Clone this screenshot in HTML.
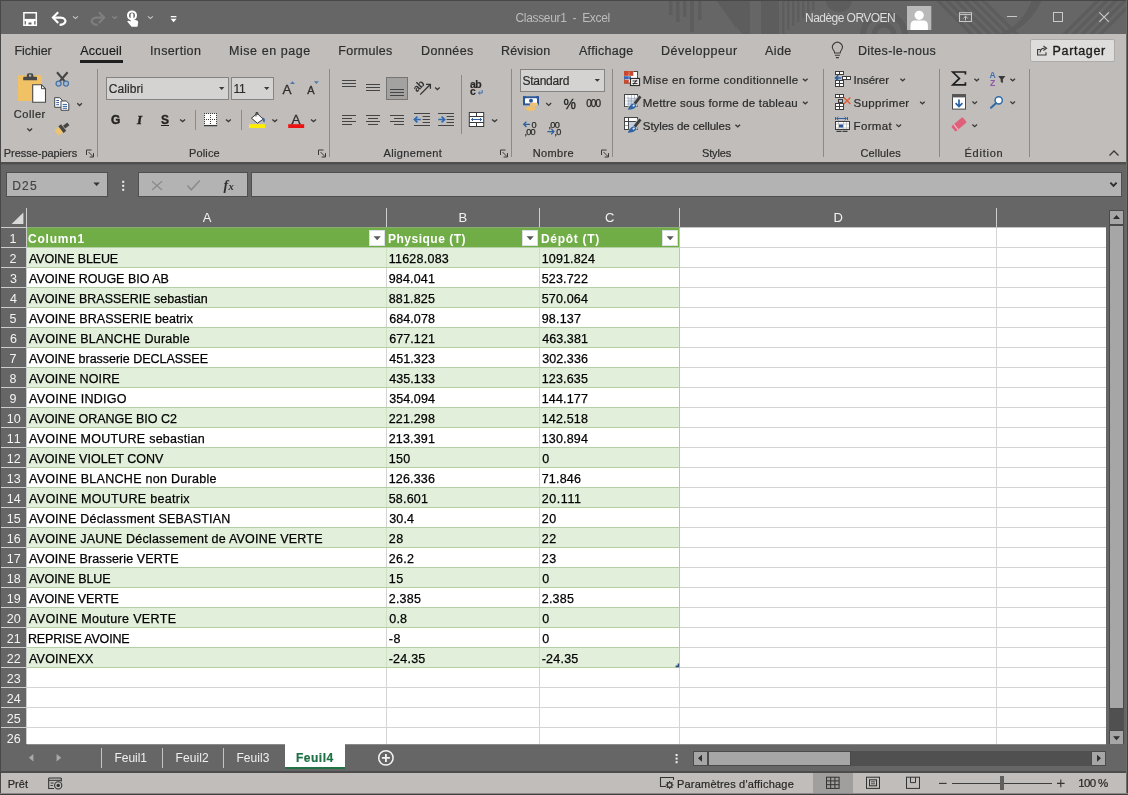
<!DOCTYPE html>
<html lang="fr"><head><meta charset="utf-8"><title>Classeur1 - Excel</title>
<style>
html,body{margin:0;padding:0;}
body{width:1128px;height:795px;overflow:hidden;background:#666666;position:relative;font-family:"Liberation Sans",sans-serif;}
#app{position:absolute;left:0;top:0;width:1128px;height:795px;overflow:hidden;}
#app div,#app span,#app svg{position:absolute;}
#app span{white-space:pre;line-height:20px;height:20px;}
#tx{left:0;top:0;width:1128px;height:795px;will-change:transform;}
#app svg{overflow:visible;}
</style></head>
<body><div id="app">
<div style="left:0px;top:0px;width:1128px;height:34px;background:#666666;"></div>
<svg style="left:0;top:0;overflow:hidden" width="1128" height="34" viewBox="0 0 1128 34"><rect x="669" y="0" width="3.5" height="15" fill="#5d5d5d"/><rect x="676" y="0" width="3.5" height="22" fill="#5d5d5d"/><rect x="683" y="0" width="3.5" height="17" fill="#5d5d5d"/><rect x="690" y="0" width="4" height="32" fill="#5d5d5d"/><rect x="698" y="0" width="3.5" height="20" fill="#5d5d5d"/><path d="M716 0 L736 0 L736 28 Z" fill="#5d5d5d"/><path d="M736 0 L750 0 L750 34 L742 34 L736 26 Z" fill="#5d5d5d"/><rect x="761" y="0" width="18" height="34" fill="#5d5d5d"/><rect x="782" y="0" width="2.5" height="34" fill="#5d5d5d"/><rect x="787" y="0" width="2.5" height="30" fill="#5d5d5d"/><rect x="792" y="0" width="2.5" height="26" fill="#5d5d5d"/><rect x="797" y="0" width="2.5" height="22" fill="#5d5d5d"/><rect x="802" y="0" width="2.5" height="18" fill="#5d5d5d"/><rect x="807" y="0" width="2.5" height="14" fill="#5d5d5d"/><rect x="812" y="0" width="2.5" height="10" fill="#5d5d5d"/><path d="M826 0 A13 12 0 0 0 852 0 Z" fill="#5d5d5d"/><circle cx="884" cy="35" r="21" fill="none" stroke="#5d5d5d" stroke-width="6"/><circle cx="884" cy="35" r="10" fill="none" stroke="#5d5d5d" stroke-width="5"/><path d="M935 0 L940 0 L974 34 L969 34 Z" fill="#5d5d5d"/><path d="M944 0 L949 0 L983 34 L978 34 Z" fill="#5d5d5d"/><path d="M953 0 L958 0 L992 34 L987 34 Z" fill="#5d5d5d"/><path d="M962 0 L967 0 L1001 34 L996 34 Z" fill="#5d5d5d"/><path d="M971 0 L976 0 L1010 34 L1005 34 Z" fill="#5d5d5d"/><path d="M980 0 L985 0 L1019 34 L1014 34 Z" fill="#5d5d5d"/><path d="M1032 0 A 60 60 0 0 1 1000 34 L1010 34 A 70 70 0 0 0 1042 0 Z" fill="#5d5d5d"/><path d="M1096 0 L1101 0 L1067 34 L1062 34 Z" fill="#5d5d5d"/><path d="M1105 0 L1110 0 L1076 34 L1071 34 Z" fill="#5d5d5d"/><path d="M1114 0 L1119 0 L1085 34 L1080 34 Z" fill="#5d5d5d"/><path d="M1123 0 L1128 0 L1094 34 L1089 34 Z" fill="#5d5d5d"/><path d="M1132 0 L1137 0 L1103 34 L1098 34 Z" fill="#5d5d5d"/></svg>
<div style="left:0px;top:34px;width:1128px;height:128px;background:#c0bdba;"></div>
<div style="left:0px;top:162px;width:1128px;height:2px;background:#4e4e4e;"></div>
<div style="left:0px;top:164px;width:1128px;height:1px;background:#5c5c5c;"></div>
<div style="left:80px;top:60px;width:43px;height:3px;background:#1f1f1f;"></div>
<div style="left:1030px;top:39px;width:85px;height:23px;background:#dfdddb;border:1px solid #aeacaa;box-sizing:border-box;border-radius:2px;"></div>
<div style="left:97px;top:69px;width:1px;height:88px;background:#8c8a88;"></div>
<div style="left:329px;top:69px;width:1px;height:88px;background:#8c8a88;"></div>
<div style="left:511px;top:69px;width:1px;height:88px;background:#8c8a88;"></div>
<div style="left:612px;top:69px;width:1px;height:88px;background:#8c8a88;"></div>
<div style="left:823px;top:69px;width:1px;height:88px;background:#8c8a88;"></div>
<div style="left:939px;top:69px;width:1px;height:88px;background:#8c8a88;"></div>
<div style="left:1029px;top:69px;width:1px;height:88px;background:#8c8a88;"></div>
<div style="left:106px;top:77px;width:123px;height:23px;background:#d5d3d1;border:1px solid #868482;box-sizing:border-box;"></div>
<div style="left:231px;top:77px;width:43px;height:23px;background:#d5d3d1;border:1px solid #868482;box-sizing:border-box;"></div>
<div style="left:161px;top:125px;width:8px;height:1px;background:#222222;"></div>
<div style="left:195px;top:110px;width:1px;height:20px;background:#8c8a88;"></div>
<div style="left:241px;top:110px;width:1px;height:20px;background:#8c8a88;"></div>
<div style="left:386px;top:77px;width:22px;height:23px;background:#a4a2a0;border:1px solid #777573;box-sizing:border-box;"></div>
<div style="left:461px;top:75px;width:1px;height:59px;background:#8c8a88;"></div>
<div style="left:520px;top:69px;width:85px;height:23px;background:#d5d3d1;border:1px solid #868482;box-sizing:border-box;"></div>
<div style="left:6px;top:172px;width:102px;height:25px;background:#b3b3b3;border:1px solid #4f4f4f;box-sizing:border-box;"></div>
<div style="left:138px;top:172px;width:110px;height:25px;background:#b3b3b3;border:1px solid #4f4f4f;box-sizing:border-box;"></div>
<div style="left:251px;top:172px;width:871px;height:25px;background:#b3b3b3;border:1px solid #4f4f4f;box-sizing:border-box;"></div>
<div style="left:27px;top:228px;width:1079px;height:517px;background:#ffffff;"></div>
<div style="left:386px;top:208px;width:1px;height:20px;background:#cdcdcd;"></div>
<div style="left:539px;top:208px;width:1px;height:20px;background:#cdcdcd;"></div>
<div style="left:679px;top:208px;width:1px;height:20px;background:#cdcdcd;"></div>
<div style="left:996px;top:208px;width:1px;height:20px;background:#cdcdcd;"></div>
<div style="left:26px;top:208px;width:1px;height:537px;background:#cdcdcd;"></div>
<div style="left:1px;top:227px;width:26px;height:1px;background:#cdcdcd;"></div>
<div style="left:1px;top:247px;width:26px;height:1px;background:#cdcdcd;"></div>
<div style="left:1px;top:267px;width:26px;height:1px;background:#cdcdcd;"></div>
<div style="left:1px;top:287px;width:26px;height:1px;background:#cdcdcd;"></div>
<div style="left:1px;top:307px;width:26px;height:1px;background:#cdcdcd;"></div>
<div style="left:1px;top:327px;width:26px;height:1px;background:#cdcdcd;"></div>
<div style="left:1px;top:347px;width:26px;height:1px;background:#cdcdcd;"></div>
<div style="left:1px;top:367px;width:26px;height:1px;background:#cdcdcd;"></div>
<div style="left:1px;top:387px;width:26px;height:1px;background:#cdcdcd;"></div>
<div style="left:1px;top:407px;width:26px;height:1px;background:#cdcdcd;"></div>
<div style="left:1px;top:427px;width:26px;height:1px;background:#cdcdcd;"></div>
<div style="left:1px;top:447px;width:26px;height:1px;background:#cdcdcd;"></div>
<div style="left:1px;top:467px;width:26px;height:1px;background:#cdcdcd;"></div>
<div style="left:1px;top:487px;width:26px;height:1px;background:#cdcdcd;"></div>
<div style="left:1px;top:507px;width:26px;height:1px;background:#cdcdcd;"></div>
<div style="left:1px;top:527px;width:26px;height:1px;background:#cdcdcd;"></div>
<div style="left:1px;top:547px;width:26px;height:1px;background:#cdcdcd;"></div>
<div style="left:1px;top:567px;width:26px;height:1px;background:#cdcdcd;"></div>
<div style="left:1px;top:587px;width:26px;height:1px;background:#cdcdcd;"></div>
<div style="left:1px;top:607px;width:26px;height:1px;background:#cdcdcd;"></div>
<div style="left:1px;top:627px;width:26px;height:1px;background:#cdcdcd;"></div>
<div style="left:1px;top:647px;width:26px;height:1px;background:#cdcdcd;"></div>
<div style="left:1px;top:667px;width:26px;height:1px;background:#cdcdcd;"></div>
<div style="left:1px;top:687px;width:26px;height:1px;background:#cdcdcd;"></div>
<div style="left:1px;top:707px;width:26px;height:1px;background:#cdcdcd;"></div>
<div style="left:1px;top:727px;width:26px;height:1px;background:#cdcdcd;"></div>
<div style="left:1px;top:747px;width:26px;height:1px;background:#cdcdcd;"></div>
<div style="left:386px;top:228px;width:1px;height:517px;background:#d4d4d4;"></div>
<div style="left:539px;top:228px;width:1px;height:517px;background:#d4d4d4;"></div>
<div style="left:679px;top:228px;width:1px;height:517px;background:#d4d4d4;"></div>
<div style="left:996px;top:228px;width:1px;height:517px;background:#d4d4d4;"></div>
<div style="left:27px;top:247px;width:1079px;height:1px;background:#d4d4d4;"></div>
<div style="left:27px;top:267px;width:1079px;height:1px;background:#d4d4d4;"></div>
<div style="left:27px;top:287px;width:1079px;height:1px;background:#d4d4d4;"></div>
<div style="left:27px;top:307px;width:1079px;height:1px;background:#d4d4d4;"></div>
<div style="left:27px;top:327px;width:1079px;height:1px;background:#d4d4d4;"></div>
<div style="left:27px;top:347px;width:1079px;height:1px;background:#d4d4d4;"></div>
<div style="left:27px;top:367px;width:1079px;height:1px;background:#d4d4d4;"></div>
<div style="left:27px;top:387px;width:1079px;height:1px;background:#d4d4d4;"></div>
<div style="left:27px;top:407px;width:1079px;height:1px;background:#d4d4d4;"></div>
<div style="left:27px;top:427px;width:1079px;height:1px;background:#d4d4d4;"></div>
<div style="left:27px;top:447px;width:1079px;height:1px;background:#d4d4d4;"></div>
<div style="left:27px;top:467px;width:1079px;height:1px;background:#d4d4d4;"></div>
<div style="left:27px;top:487px;width:1079px;height:1px;background:#d4d4d4;"></div>
<div style="left:27px;top:507px;width:1079px;height:1px;background:#d4d4d4;"></div>
<div style="left:27px;top:527px;width:1079px;height:1px;background:#d4d4d4;"></div>
<div style="left:27px;top:547px;width:1079px;height:1px;background:#d4d4d4;"></div>
<div style="left:27px;top:567px;width:1079px;height:1px;background:#d4d4d4;"></div>
<div style="left:27px;top:587px;width:1079px;height:1px;background:#d4d4d4;"></div>
<div style="left:27px;top:607px;width:1079px;height:1px;background:#d4d4d4;"></div>
<div style="left:27px;top:627px;width:1079px;height:1px;background:#d4d4d4;"></div>
<div style="left:27px;top:647px;width:1079px;height:1px;background:#d4d4d4;"></div>
<div style="left:27px;top:667px;width:1079px;height:1px;background:#d4d4d4;"></div>
<div style="left:27px;top:687px;width:1079px;height:1px;background:#d4d4d4;"></div>
<div style="left:27px;top:707px;width:1079px;height:1px;background:#d4d4d4;"></div>
<div style="left:27px;top:727px;width:1079px;height:1px;background:#d4d4d4;"></div>
<div style="left:27px;top:747px;width:1079px;height:1px;background:#d4d4d4;"></div>
<div style="left:27px;top:228px;width:653px;height:19px;background:#70ad47;"></div>
<div style="left:27px;top:247px;width:653px;height:1px;background:#b4cfa3;"></div>
<div style="left:27px;top:248px;width:653px;height:19px;background:#e2efda;"></div>
<div style="left:27px;top:267px;width:653px;height:1px;background:#b4cfa3;"></div>
<div style="left:386px;top:248px;width:1px;height:19px;background:#cfe0c3;"></div>
<div style="left:539px;top:248px;width:1px;height:19px;background:#cfe0c3;"></div>
<div style="left:27px;top:287px;width:653px;height:1px;background:#b4cfa3;"></div>
<div style="left:386px;top:268px;width:1px;height:19px;background:#d4d4d4;"></div>
<div style="left:539px;top:268px;width:1px;height:19px;background:#d4d4d4;"></div>
<div style="left:27px;top:288px;width:653px;height:19px;background:#e2efda;"></div>
<div style="left:27px;top:307px;width:653px;height:1px;background:#b4cfa3;"></div>
<div style="left:386px;top:288px;width:1px;height:19px;background:#cfe0c3;"></div>
<div style="left:539px;top:288px;width:1px;height:19px;background:#cfe0c3;"></div>
<div style="left:27px;top:327px;width:653px;height:1px;background:#b4cfa3;"></div>
<div style="left:386px;top:308px;width:1px;height:19px;background:#d4d4d4;"></div>
<div style="left:539px;top:308px;width:1px;height:19px;background:#d4d4d4;"></div>
<div style="left:27px;top:328px;width:653px;height:19px;background:#e2efda;"></div>
<div style="left:27px;top:347px;width:653px;height:1px;background:#b4cfa3;"></div>
<div style="left:386px;top:328px;width:1px;height:19px;background:#cfe0c3;"></div>
<div style="left:539px;top:328px;width:1px;height:19px;background:#cfe0c3;"></div>
<div style="left:27px;top:367px;width:653px;height:1px;background:#b4cfa3;"></div>
<div style="left:386px;top:348px;width:1px;height:19px;background:#d4d4d4;"></div>
<div style="left:539px;top:348px;width:1px;height:19px;background:#d4d4d4;"></div>
<div style="left:27px;top:368px;width:653px;height:19px;background:#e2efda;"></div>
<div style="left:27px;top:387px;width:653px;height:1px;background:#b4cfa3;"></div>
<div style="left:386px;top:368px;width:1px;height:19px;background:#cfe0c3;"></div>
<div style="left:539px;top:368px;width:1px;height:19px;background:#cfe0c3;"></div>
<div style="left:27px;top:407px;width:653px;height:1px;background:#b4cfa3;"></div>
<div style="left:386px;top:388px;width:1px;height:19px;background:#d4d4d4;"></div>
<div style="left:539px;top:388px;width:1px;height:19px;background:#d4d4d4;"></div>
<div style="left:27px;top:408px;width:653px;height:19px;background:#e2efda;"></div>
<div style="left:27px;top:427px;width:653px;height:1px;background:#b4cfa3;"></div>
<div style="left:386px;top:408px;width:1px;height:19px;background:#cfe0c3;"></div>
<div style="left:539px;top:408px;width:1px;height:19px;background:#cfe0c3;"></div>
<div style="left:27px;top:447px;width:653px;height:1px;background:#b4cfa3;"></div>
<div style="left:386px;top:428px;width:1px;height:19px;background:#d4d4d4;"></div>
<div style="left:539px;top:428px;width:1px;height:19px;background:#d4d4d4;"></div>
<div style="left:27px;top:448px;width:653px;height:19px;background:#e2efda;"></div>
<div style="left:27px;top:467px;width:653px;height:1px;background:#b4cfa3;"></div>
<div style="left:386px;top:448px;width:1px;height:19px;background:#cfe0c3;"></div>
<div style="left:539px;top:448px;width:1px;height:19px;background:#cfe0c3;"></div>
<div style="left:27px;top:487px;width:653px;height:1px;background:#b4cfa3;"></div>
<div style="left:386px;top:468px;width:1px;height:19px;background:#d4d4d4;"></div>
<div style="left:539px;top:468px;width:1px;height:19px;background:#d4d4d4;"></div>
<div style="left:27px;top:488px;width:653px;height:19px;background:#e2efda;"></div>
<div style="left:27px;top:507px;width:653px;height:1px;background:#b4cfa3;"></div>
<div style="left:386px;top:488px;width:1px;height:19px;background:#cfe0c3;"></div>
<div style="left:539px;top:488px;width:1px;height:19px;background:#cfe0c3;"></div>
<div style="left:27px;top:527px;width:653px;height:1px;background:#b4cfa3;"></div>
<div style="left:386px;top:508px;width:1px;height:19px;background:#d4d4d4;"></div>
<div style="left:539px;top:508px;width:1px;height:19px;background:#d4d4d4;"></div>
<div style="left:27px;top:528px;width:653px;height:19px;background:#e2efda;"></div>
<div style="left:27px;top:547px;width:653px;height:1px;background:#b4cfa3;"></div>
<div style="left:386px;top:528px;width:1px;height:19px;background:#cfe0c3;"></div>
<div style="left:539px;top:528px;width:1px;height:19px;background:#cfe0c3;"></div>
<div style="left:27px;top:567px;width:653px;height:1px;background:#b4cfa3;"></div>
<div style="left:386px;top:548px;width:1px;height:19px;background:#d4d4d4;"></div>
<div style="left:539px;top:548px;width:1px;height:19px;background:#d4d4d4;"></div>
<div style="left:27px;top:568px;width:653px;height:19px;background:#e2efda;"></div>
<div style="left:27px;top:587px;width:653px;height:1px;background:#b4cfa3;"></div>
<div style="left:386px;top:568px;width:1px;height:19px;background:#cfe0c3;"></div>
<div style="left:539px;top:568px;width:1px;height:19px;background:#cfe0c3;"></div>
<div style="left:27px;top:607px;width:653px;height:1px;background:#b4cfa3;"></div>
<div style="left:386px;top:588px;width:1px;height:19px;background:#d4d4d4;"></div>
<div style="left:539px;top:588px;width:1px;height:19px;background:#d4d4d4;"></div>
<div style="left:27px;top:608px;width:653px;height:19px;background:#e2efda;"></div>
<div style="left:27px;top:627px;width:653px;height:1px;background:#b4cfa3;"></div>
<div style="left:386px;top:608px;width:1px;height:19px;background:#cfe0c3;"></div>
<div style="left:539px;top:608px;width:1px;height:19px;background:#cfe0c3;"></div>
<div style="left:27px;top:647px;width:653px;height:1px;background:#b4cfa3;"></div>
<div style="left:386px;top:628px;width:1px;height:19px;background:#d4d4d4;"></div>
<div style="left:539px;top:628px;width:1px;height:19px;background:#d4d4d4;"></div>
<div style="left:27px;top:648px;width:653px;height:19px;background:#e2efda;"></div>
<div style="left:27px;top:667px;width:653px;height:1px;background:#b4cfa3;"></div>
<div style="left:386px;top:648px;width:1px;height:19px;background:#cfe0c3;"></div>
<div style="left:539px;top:648px;width:1px;height:19px;background:#cfe0c3;"></div>
<div style="left:679px;top:228px;width:1px;height:440px;background:#b4cfa3;"></div>
<div style="left:27px;top:227px;width:653px;height:1px;background:#8aab74;"></div>
<div style="left:680px;top:227px;width:426px;height:1px;background:#c4c4c4;"></div>
<div style="left:369px;top:230px;width:16px;height:16px;background:#ffffff;border:1px solid #dedee6;box-sizing:border-box;"></div>
<div style="left:522px;top:230px;width:16px;height:16px;background:#ffffff;border:1px solid #dedee6;box-sizing:border-box;"></div>
<div style="left:662px;top:230px;width:16px;height:16px;background:#ffffff;border:1px solid #dedee6;box-sizing:border-box;"></div>
<div style="left:1106px;top:208px;width:20px;height:537px;background:#666666;"></div>
<div style="left:1109px;top:225px;width:15px;height:506px;background:#505050;"></div>
<div style="left:1109px;top:210px;width:15px;height:15px;background:#a6a6a6;border:1px solid #4a4a4a;box-sizing:border-box;"></div>
<div style="left:1109px;top:225px;width:15px;height:484px;background:#a6a6a6;border:1px solid #4a4a4a;box-sizing:border-box;"></div>
<div style="left:1109px;top:730px;width:15px;height:15px;background:#a6a6a6;border:1px solid #4a4a4a;box-sizing:border-box;"></div>
<div style="left:0px;top:744px;width:1128px;height:28px;background:#666666;"></div>
<div style="left:27px;top:744px;width:1079px;height:1px;background:#8a8a8a;"></div>
<div style="left:101px;top:748px;width:1px;height:20px;background:#c4c4c4;"></div>
<div style="left:162px;top:748px;width:1px;height:20px;background:#c4c4c4;"></div>
<div style="left:223px;top:748px;width:1px;height:20px;background:#c4c4c4;"></div>
<div style="left:284.5px;top:744px;width:60px;height:23px;background:#ffffff;"></div>
<div style="left:284.5px;top:767px;width:60px;height:2px;background:#217346;"></div>
<div style="left:693px;top:751px;width:413px;height:15px;background:#505050;"></div>
<div style="left:693px;top:751px;width:15px;height:15px;background:#a6a6a6;border:1px solid #4a4a4a;box-sizing:border-box;"></div>
<div style="left:708px;top:751px;width:143px;height:15px;background:#a6a6a6;border:1px solid #4a4a4a;box-sizing:border-box;"></div>
<div style="left:1091px;top:751px;width:15px;height:15px;background:#a6a6a6;border:1px solid #4a4a4a;box-sizing:border-box;"></div>
<div style="left:0px;top:771px;width:1128px;height:2px;background:#4c4c4c;"></div>
<div style="left:0px;top:773px;width:1128px;height:22px;background:#c0bdba;"></div>
<div style="left:813px;top:773px;width:40px;height:21px;background:#a19f9d;"></div>
<div style="left:952px;top:783px;width:100px;height:1px;background:#3e3e3e;"></div>
<div style="left:1000px;top:776px;width:4px;height:14px;background:#5f5f5f;"></div>
<div style="left:0px;top:0px;width:1128px;height:1px;background:#484848;"></div>
<div style="left:0px;top:0px;width:1px;height:795px;background:#484848;"></div>
<div style="left:1126px;top:0px;width:1px;height:795px;background:#6e6c6a;"></div>
<div style="left:1127px;top:0px;width:1px;height:795px;background:#424242;"></div>
<div style="left:0px;top:794px;width:1128px;height:1px;background:#404040;"></div>
<div style="left:0px;top:793px;width:1128px;height:1px;background:#8b8987;"></div>
<svg style="left:0;top:0;will-change:transform" width="1128" height="795" viewBox="0 0 1128 795">
<path d="M23.9 12.7 H36.3 V25.3 H23.9 Z" fill="none" stroke="#ffffff" stroke-width="1.5"/><rect x="24.4" y="18.9" width="11.4" height="2.2" fill="#ffffff"/><path d="M25.9 21 H34.2 V25.3 H31.5 V22.5 H28.5 V25.3 H25.9 Z" fill="#ffffff"/>
<path d="M58.2 12.3 L52.9 17.6 L58.2 22.9" fill="none" stroke="#ffffff" stroke-width="2.1"/><path d="M53.3 17.6 H60.4 C64.6 17.6 66 20.3 65.1 22.3 C64.3 24 62.4 24.8 59.6 24.9" fill="none" stroke="#ffffff" stroke-width="2.1"/>
<path d="M73.00 16.40 L75.50 18.50 L78.00 16.40" fill="none" stroke="#c4c4c4" stroke-width="1.1"/>
<path d="M98.9 12.3 L104.2 17.6 L98.9 22.9" fill="none" stroke="#7f7f7f" stroke-width="2.1"/><path d="M103.8 17.6 H96.7 C92.5 17.6 91.1 20.3 92 22.3 C92.8 24 94.7 24.8 97.5 24.9" fill="none" stroke="#7f7f7f" stroke-width="2.1"/>
<path d="M112.40 16.40 L114.70 18.50 L117.00 16.40" fill="none" stroke="#8c8c8c" stroke-width="1.1"/>
<circle cx="132" cy="15.4" r="4" fill="none" stroke="#ffffff" stroke-width="2"/><path d="M130.6 14.6 a1.4 1.4 0 0 1 2.8 0 V19.5 L137 20.6 Q138.4 21 138.2 22.6 L137.5 26.8 H131.6 L127.2 21.4 Q128.3 19.8 130.6 21.6 Z" fill="#ffffff"/>
<path d="M147.90 16.40 L150.40 18.50 L152.90 16.40" fill="none" stroke="#c4c4c4" stroke-width="1.1"/>
<rect x="170.8" y="16" width="5.6" height="1.3" fill="#ffffff"/><path d="M170.6 18.8 H176.6 L173.6 22.2 Z" fill="#ffffff"/>
<rect x="907" y="6" width="24.3" height="24" fill="#b9b9b9"/><circle cx="919.2" cy="15.3" r="4.6" fill="#ffffff"/><path d="M910.5 30 V25.5 Q910.5 20.6 915 20.6 H923.4 Q927.9 20.6 927.9 25.5 V30 Z" fill="#ffffff"/>
<rect x="959.5" y="12.7" width="12" height="8.8" fill="none" stroke="#c9c9c9" stroke-width="1"/><path d="M959.5 14.6 H971.5" stroke="#c9c9c9" stroke-width="1"/><path d="M965.5 20.5 V16.3 M963.3 18.3 L965.5 16.2 L967.7 18.3" fill="none" stroke="#c9c9c9" stroke-width="1"/>
<path d="M1007 16.5 H1017" stroke="#c9c9c9" stroke-width="1"/>
<rect x="1053.5" y="12.5" width="9" height="9" fill="none" stroke="#c9c9c9" stroke-width="1"/>
<path d="M1099.3 12.3 L1108.9 21.9 M1108.9 12.3 L1099.3 21.9" stroke="#c9c9c9" stroke-width="1.1"/>
<path d="M834.6 53 Q834.6 51.4 833.4 50 A4.9 4.9 0 1 1 841.4 50 Q840.2 51.4 840.2 53 Z" fill="none" stroke="#3a3a3a" stroke-width="1.1"/><path d="M834.9 55.3 H839.9 M835.9 57.6 H838.9" stroke="#3a3a3a" stroke-width="1.1"/>
<path d="M1040.5 49.5 H1037.6 V55 H1046 V52.3" fill="none" stroke="#3a3a3a" stroke-width="1.1"/><path d="M1040 52.5 Q1040.5 48.3 1044.6 48.1 M1043.4 45.9 L1046.6 48.2 L1043.4 50.5" fill="none" stroke="#3a3a3a" stroke-width="1.1"/>
<path d="M86.5 155.0 V150.0 H91.5" fill="none" stroke="#3a3a3a" stroke-width="1"/><path d="M88.6 152.1 L93.2 156.7 M93.5 153.1 V157.0 H89.6" fill="none" stroke="#3a3a3a" stroke-width="1"/>
<path d="M318.5 155.0 V150.0 H323.5" fill="none" stroke="#3a3a3a" stroke-width="1"/><path d="M320.6 152.1 L325.2 156.7 M325.5 153.1 V157.0 H321.6" fill="none" stroke="#3a3a3a" stroke-width="1"/>
<path d="M500.5 155.0 V150.0 H505.5" fill="none" stroke="#3a3a3a" stroke-width="1"/><path d="M502.6 152.1 L507.2 156.7 M507.5 153.1 V157.0 H503.6" fill="none" stroke="#3a3a3a" stroke-width="1"/>
<path d="M601.5 155.0 V150.0 H606.5" fill="none" stroke="#3a3a3a" stroke-width="1"/><path d="M603.6 152.1 L608.2 156.7 M608.5 153.1 V157.0 H604.6" fill="none" stroke="#3a3a3a" stroke-width="1"/>
<path d="M1109.5 155.5 L1114 151 L1118.5 155.5" fill="none" stroke="#3a3a3a" stroke-width="1.3"/>
<rect x="18" y="75.3" width="23.8" height="25.7" fill="#f0c265"/><path d="M23.2 80.2 V77.6 Q23.2 76.8 24 76.8 H26.8 V75.4 Q26.8 73.2 29 73.2 H31.2 Q33.4 73.2 33.4 75.4 V76.8 H36.2 Q37 76.8 37 77.6 V80.2 Z" fill="#474747"/><rect x="29" y="74.6" width="2.2" height="2" fill="#c0bdba"/><path d="M32.7 84.7 H41.5 L45.5 88.7 V102.3 H32.7 Z" fill="#ffffff" stroke="#474747" stroke-width="1.1"/><path d="M41.5 84.7 V88.7 H45.5" fill="none" stroke="#474747" stroke-width="1"/>
<path d="M27.30 128.60 L29.70 130.80 L32.10 128.60" fill="none" stroke="#3b3a39" stroke-width="1.3"/>
<path d="M57 72.2 L64.8 81.4 M67.6 72.2 L59.8 81.4" stroke="#454545" stroke-width="2.1" fill="none"/><circle cx="58.6" cy="83.6" r="2.5" fill="#aab9cc" stroke="#4a74a6" stroke-width="1.3"/><circle cx="66" cy="83.6" r="2.5" fill="#aab9cc" stroke="#4a74a6" stroke-width="1.3"/>
<path d="M54.7 97.7 H59.7 L62.3 100.3 V107.3 H54.7 Z" fill="#ffffff" stroke="#454545" stroke-width="1"/><path d="M56.3 100.5 H59 M56.3 102.6 H59 M56.3 104.7 H59" stroke="#2f5f9e" stroke-width="1"/><path d="M61 101 H66.2 L68.8 103.6 V110.3 H61 Z" fill="#ffffff" stroke="#454545" stroke-width="1"/><path d="M62.7 104.4 H67 M62.7 106.4 H67 M62.7 108.3 H67" stroke="#2f5f9e" stroke-width="1"/>
<path d="M77.30 103.20 L79.60 105.50 L81.90 103.20" fill="none" stroke="#3b3a39" stroke-width="1.3"/>
<g transform="rotate(-38 63 128)"><rect x="54.8" y="124.6" width="6" height="6.8" rx="1" fill="#eec46e"/><rect x="60.4" y="123.8" width="3.4" height="8.4" fill="#454545"/><rect x="64.4" y="126.2" width="5.4" height="3.6" fill="#454545"/></g>
<path d="M219 87 L224.4 87 L221.7 90 Z" fill="#3a3a3a"/>
<path d="M264 87 L269.4 87 L266.7 90 Z" fill="#3a3a3a"/>
<path d="M290 83.9 L295 83.9 L292.5 81.2 Z" fill="#4a78ad"/>
<path d="M314 81.2 L318.8 81.2 L316.4 83.9 Z" fill="#4a78ad"/>
<path d="M180.10 119.40 L182.60 121.60 L185.10 119.40" fill="none" stroke="#3b3a39" stroke-width="1.3"/>
<rect x="204.5" y="113.5" width="12" height="12" fill="#ffffff"/><path d="M204 113.5 H217 M204 119.5 H217" fill="none" stroke="#3a3a3a" stroke-width="1" stroke-dasharray="1 1"/><path d="M204.5 113 V125 M210.5 113 V125 M216.5 113 V125" fill="none" stroke="#3a3a3a" stroke-width="1" stroke-dasharray="1 1"/><path d="M204 125.6 H217.2" stroke="#3a3a3a" stroke-width="1.3"/>
<path d="M226.00 119.40 L228.40 121.60 L230.80 119.40" fill="none" stroke="#3b3a39" stroke-width="1.3"/>
<path d="M257.2 113.4 L263.2 119.2 L257.4 123.2 L251.4 118.2 Z" fill="#ffffff" stroke="#3a3a3a" stroke-width="1"/><path d="M256 116.5 V112.6 H257.8 V115" fill="none" stroke="#3a3a3a" stroke-width="1"/><path d="M262.6 117.2 Q266.2 118.8 264.4 122.4 Q262.2 121.8 262.6 117.2 Z" fill="#3c6aa3"/><rect x="249" y="124.2" width="16.2" height="3.8" fill="#ffee00"/>
<path d="M272.40 119.40 L274.80 121.60 L277.20 119.40" fill="none" stroke="#3b3a39" stroke-width="1.3"/>
<rect x="288.2" y="124.2" width="16" height="3.8" fill="#ee1111"/>
<path d="M311.00 119.40 L313.50 121.60 L316.00 119.40" fill="none" stroke="#3b3a39" stroke-width="1.3"/>
<path d="M342 80.5 H356 M342 83.5 H356 M342 86.5 H356 " stroke="#444444" stroke-width="1.05" fill="none"/>
<path d="M366 84.5 H380 M366 87.5 H380 M366 90.5 H380 " stroke="#444444" stroke-width="1.05" fill="none"/>
<path d="M390 89.5 H404 M390 92.5 H404 M390 95.5 H404 " stroke="#444444" stroke-width="1.05" fill="none"/>
<text transform="translate(417 92.6) rotate(-45)" x="0" y="0" font-family="Liberation Sans, sans-serif" font-size="10.5" font-weight="700" fill="#333" letter-spacing="-0.5">ab</text><path d="M420.2 94.6 L430 84.8 M426 84.3 H430.4 V88.7" fill="none" stroke="#333" stroke-width="1.3"/>
<path d="M435.10 87.40 L437.40 89.50 L439.70 87.40" fill="none" stroke="#3b3a39" stroke-width="1.3"/>
<path d="M342 115.5 H356 M342 118.5 H352 M342 121.5 H356 M342 124.5 H352 " stroke="#444444" stroke-width="1.05" fill="none"/>
<path d="M366 115.5 H380 M368.0 118.5 H378.0 M366 121.5 H380 M368.0 124.5 H378.0 " stroke="#444444" stroke-width="1.05" fill="none"/>
<path d="M390 115.5 H404 M394 118.5 H404 M390 121.5 H404 M394 124.5 H404 " stroke="#444444" stroke-width="1.05" fill="none"/>
<path d="M414 113.5 H430 M414 125.5 H430 M422.6 116.5 H430 M422.6 119.5 H430 M422.6 122.5 H430" stroke="#444444" stroke-width="1.05" fill="none"/>
<path d="M414.8 119.5 H420.8 M417.4 116.6 L414.4 119.5 L417.4 122.4" stroke="#2e6ab3" stroke-width="1.7" fill="none"/>
<path d="M438 113.5 H454 M438 125.5 H454 M446.6 116.5 H454 M446.6 119.5 H454 M446.6 122.5 H454" stroke="#444444" stroke-width="1.05" fill="none"/>
<path d="M438.3 119.5 H444.2 M441.6 116.6 L444.6 119.5 L441.6 122.4" stroke="#2e6ab3" stroke-width="1.7" fill="none"/>
<path d="M482.2 90 V93 H478.6 M480.2 91.4 L478.4 93 L480.2 94.6" fill="none" stroke="#3f6fae" stroke-width="1"/>
<rect x="469.3" y="112.5" width="14.4" height="14" fill="#ffffff" stroke="#3a3a3a" stroke-width="1"/><path d="M469.3 116.5 H483.7 M469.3 122.5 H483.7 M476.5 112.5 V116.5 M476.5 122.5 V126.5" stroke="#3a3a3a" stroke-width="1" fill="none"/><path d="M471.6 119.5 H481.4 M473 118 L471.4 119.5 L473 121 M480 118 L481.6 119.5 L480 121" stroke="#2e5f9e" stroke-width="1" fill="none"/>
<path d="M492.00 119.40 L494.60 121.60 L497.20 119.40" fill="none" stroke="#3b3a39" stroke-width="1.3"/>
<path d="M594.6 79 L600 79 L597.3 81.8 Z" fill="#3a3a3a"/>
<rect x="523" y="96.3" width="16" height="9" fill="#2b579a"/><path d="M525 98.2 H537 V103.4 H525 Z" fill="#ffffff"/><path d="M523 96.3 h3 v2 h-3 Z M536 96.3 h3 v2 h-3 Z" fill="#2b579a"/><circle cx="531" cy="100.8" r="2" fill="#2b579a"/><ellipse cx="534" cy="104.6" rx="4.2" ry="2" fill="#ecc27a"/><ellipse cx="530.6" cy="108.6" rx="4.6" ry="2.4" fill="#f0c16a"/>
<path d="M546.20 103.10 L548.70 105.40 L551.20 103.10" fill="none" stroke="#3b3a39" stroke-width="1.3"/>
<path d="M523.6 124.3 H530 M526.4 121.6 L523.7 124.3 L526.4 127" stroke="#2e5f9e" stroke-width="1.3" fill="none"/>
<text x="531.6" y="127.6" font-family="Liberation Sans, sans-serif" font-size="9.2" fill="#2a2a2a" stroke="#2a2a2a" stroke-width="0.25" letter-spacing="-0.8">0</text>
<text x="524.4" y="134.6" font-family="Liberation Sans, sans-serif" font-size="9.2" fill="#2a2a2a" stroke="#2a2a2a" stroke-width="0.25" letter-spacing="-0.8">,00</text>
<text x="548.6" y="127.6" font-family="Liberation Sans, sans-serif" font-size="9.2" fill="#2a2a2a" stroke="#2a2a2a" stroke-width="0.25" letter-spacing="-0.8">,00</text>
<path d="M547.4 131.6 H554 M551.2 128.9 L553.9 131.6 L551.2 134.3" stroke="#2e5f9e" stroke-width="1.3" fill="none"/>
<text x="554.4" y="134.6" font-family="Liberation Sans, sans-serif" font-size="9.2" fill="#2a2a2a" stroke="#2a2a2a" stroke-width="0.25" letter-spacing="-0.8">,0</text>
<rect x="624.5" y="71.5" width="13" height="11.5" fill="#ffffff" stroke="#454545" stroke-width="1"/><rect x="624" y="71" width="9.5" height="5" fill="#c9472c"/><rect x="624" y="76" width="7" height="3.6" fill="#3668b3"/><rect x="624" y="79.6" width="5" height="3.9" fill="#c9472c"/><path d="M629 71.5 V83 M633.5 71.5 V78 M624.5 76 H637.5 M624.5 79.6 H630" stroke="#ffffff" stroke-opacity=".55" stroke-width=".7"/><rect x="630.5" y="78.5" width="9" height="7" fill="#ffffff" stroke="#2e2e2e" stroke-width="1.2"/><path d="M632.5 81 H637.5 M632.5 83.4 H637.5" stroke="#1e1e1e" stroke-width="1" fill="none"/><path d="M636.6 79.8 L633.6 84.6" stroke="#1e1e1e" stroke-width=".9" fill="none"/>
<rect x="624.5" y="94.5" width="13" height="12" fill="#ffffff" stroke="#454545" stroke-width="1"/><rect x="628" y="98" width="9.5" height="8.5" fill="#dbe2ec"/><path d="M628 95 V106.5 M631.3 95 V106.5 M634.6 95 V106.5 M625 98 H637.5 M625 101 H637.5 M625 104 H637.5" stroke="#9eabbd" stroke-width="1" fill="none"/><rect x="625" y="95" width="2.6" height="2.6" fill="#fff"/><rect x="628.5" y="95" width="2.4" height="2.6" fill="#fff"/><rect x="631.8" y="95" width="2.4" height="2.6" fill="#fff"/><rect x="635.1" y="95" width="2" height="2.6" fill="#fff"/><rect x="625" y="98.5" width="2.6" height="2.1" fill="#fff"/><rect x="625" y="101.5" width="2.6" height="2.1" fill="#fff"/><rect x="625" y="104.5" width="2.6" height="1.6" fill="#fff"/><path d="M641 96 L634.6 104" stroke="#c0bdba" stroke-width="5"/><path d="M640.4 96.4 L634.8 103.6" stroke="#3c3c3c" stroke-width="2.8"/><path d="M627.8 109.8 Q629.6 104.6 633.2 103.4 Q636.8 103.8 636 106.6 Q634 109.8 627.8 109.8 Z" fill="#2f63a3"/><ellipse cx="633.7" cy="105.6" rx="1.3" ry=".9" fill="#e6eef8" transform="rotate(-35 633.7 105.6)"/>
<rect x="624.5" y="117.5" width="13" height="12" fill="#ffffff" stroke="#454545" stroke-width="1"/><rect x="628.5" y="121.5" width="9" height="8" fill="#c3d1e2"/><path d="M628.5 118 V129.5 M625 121.5 H637.5" stroke="#454545" stroke-width="1" fill="none"/><path d="M625 125.5 H628" stroke="#9aa7b8" stroke-width="1" fill="none"/><path d="M641 119 L634.6 127" stroke="#c0bdba" stroke-width="5"/><path d="M640.4 119.4 L634.8 126.6" stroke="#3c3c3c" stroke-width="2.8"/><path d="M627.8 132.8 Q629.6 127.6 633.2 126.4 Q636.8 126.8 636 129.6 Q634 132.8 627.8 132.8 Z" fill="#2f63a3"/><ellipse cx="633.7" cy="128.6" rx="1.3" ry=".9" fill="#e6eef8" transform="rotate(-35 633.7 128.6)"/>
<path d="M802.90 78.70 L805.25 80.80 L807.60 78.70" fill="none" stroke="#3b3a39" stroke-width="1.3"/>
<path d="M802.90 101.70 L805.25 103.80 L807.60 101.70" fill="none" stroke="#3b3a39" stroke-width="1.3"/>
<path d="M735.40 124.70 L737.75 126.80 L740.10 124.70" fill="none" stroke="#3b3a39" stroke-width="1.3"/>
<rect x="835.5" y="71.5" width="8" height="3" fill="#ffffff" stroke="#3d3d3d" stroke-width="1"/><path d="M839.5 71.5 V74.5 " stroke="#3d3d3d" stroke-width="1" fill="none"/><rect x="842.5" y="76.5" width="8" height="3" fill="#ffffff" stroke="#3d3d3d" stroke-width="1"/><path d="M846.5 76.5 V79.5 " stroke="#3d3d3d" stroke-width="1" fill="none"/><rect x="835.5" y="80.5" width="8" height="6" fill="#ffffff" stroke="#3d3d3d" stroke-width="1"/><path d="M839.5 80.5 V86.5 M835.5 83.5 H843.5 " stroke="#3d3d3d" stroke-width="1" fill="none"/><path d="M835.6 78 H841.2 M838.3 75.3 L835.6 78 L838.3 80.7" stroke="#2e5f9e" stroke-width="1.7" fill="none"/>
<path d="M900.40 78.70 L902.70 80.80 L905.00 78.70" fill="none" stroke="#3b3a39" stroke-width="1.3"/>
<rect x="835.5" y="94.5" width="8" height="3" fill="#ffffff" stroke="#3d3d3d" stroke-width="1"/><path d="M839.5 94.5 V97.5 " stroke="#3d3d3d" stroke-width="1" fill="none"/><rect x="838.5" y="99.5" width="4" height="3" fill="#b4c2d8" stroke="#3d3d3d" stroke-width="1"/><rect x="835.5" y="103.5" width="8" height="6" fill="#ffffff" stroke="#3d3d3d" stroke-width="1"/><path d="M839.5 103.5 V109.5 M835.5 106.5 H843.5 " stroke="#3d3d3d" stroke-width="1" fill="none"/><path d="M843.8 97.5 L850.4 104 M850.4 97.5 L843.8 104" stroke="#d9603a" stroke-width="1.4" fill="none"/>
<path d="M920.10 101.70 L922.40 103.80 L924.70 101.70" fill="none" stroke="#3b3a39" stroke-width="1.3"/>
<path d="M835.5 117 V120 M847.5 117 V120 M836.6 118.5 H846.4 M838.4 116.9 L836.7 118.5 L838.4 120.1 M844.6 116.9 L846.3 118.5 L844.6 120.1" stroke="#2e5f9e" stroke-width="1" fill="none"/><rect x="835.5" y="121.5" width="14" height="8" fill="#ffffff" stroke="#3d3d3d" stroke-width="1"/><path d="M836 124 H849 M836 128 H849 M838.5 122 V129 M843.5 122 V129 M846.5 122 V129" stroke="#c4c4c4" stroke-width="1" fill="none"/><rect x="839" y="124.5" width="4" height="3" fill="#2b579a"/><path d="M836.5 131.3 H841.5 M842.5 131.3 H847.5" stroke="#3d3d3d" stroke-width="1.2"/>
<path d="M896.40 124.60 L898.75 126.70 L901.10 124.60" fill="none" stroke="#3b3a39" stroke-width="1.3"/>
<path d="M965.4 74.6 V72 H952.8 L959.4 78.4 L952.8 84.9 H965.4 V82.2" fill="none" stroke="#1f1f1f" stroke-width="1.7" stroke-linejoin="miter"/>
<path d="M974.40 78.70 L976.70 80.80 L979.00 78.70" fill="none" stroke="#3b3a39" stroke-width="1.3"/>
<text x="989.6" y="77.8" font-family="Liberation Sans, sans-serif" font-size="8.6" font-weight="700" fill="#3f6fb3">A</text><text x="990" y="86.3" font-family="Liberation Sans, sans-serif" font-size="8.6" font-weight="700" fill="#8c58a6">Z</text><path d="M998.2 76 H1005.4 L1002.9 79.2 V82.9 L1000.7 81.9 V79.2 Z" fill="#3a3a3a"/>
<path d="M1010.40 78.70 L1012.70 80.80 L1015.00 78.70" fill="none" stroke="#3b3a39" stroke-width="1.3"/>
<rect x="952.5" y="94.7" width="13" height="14.4" fill="#ffffff" stroke="#4a4a4a" stroke-width="1"/><rect x="952" y="94.2" width="14" height="3.2" fill="#555555"/><path d="M959 99.4 V106.4 M955.6 103.2 L959 106.6 L962.4 103.2" stroke="#2a62a5" stroke-width="1.7" fill="none"/>
<path d="M972.40 101.60 L974.70 103.70 L977.00 101.60" fill="none" stroke="#3b3a39" stroke-width="1.3"/>
<circle cx="998.7" cy="100.3" r="3.6" fill="#ffffff" stroke="#2e6aa8" stroke-width="1.5"/><path d="M996 103.2 L991 107.8" stroke="#2e6aa8" stroke-width="2" stroke-linecap="round"/>
<path d="M1010.40 101.60 L1012.70 103.70 L1015.00 101.60" fill="none" stroke="#3b3a39" stroke-width="1.3"/>
<g transform="rotate(-40 959 124.4)"><rect x="951.6" y="121" width="14.8" height="6.8" rx="1.2" fill="#e0607a"/><rect x="954.4" y="121" width="1.1" height="6.8" fill="#f4c0cb"/></g>
<path d="M972.40 124.60 L974.70 126.70 L977.00 124.60" fill="none" stroke="#3b3a39" stroke-width="1.3"/>
<path d="M93.4 182.6 L99.8 182.6 L96.6 186 Z" fill="#333333"/>
<rect x="122.2" y="180.8" width="2" height="2" fill="#f2f2f2"/>
<rect x="122.2" y="184.8" width="2" height="2" fill="#f2f2f2"/>
<rect x="122.2" y="188.8" width="2" height="2" fill="#f2f2f2"/>
<path d="M152 181.2 L162 190 M162 181.2 L152 190" stroke="#8b8b8b" stroke-width="1.3" fill="none"/>
<path d="M187.4 185.6 L191.2 189.8 L199.8 180.4" stroke="#8b8b8b" stroke-width="1.5" fill="none"/>
<text x="223.6" y="189.6" font-family="Liberation Serif, serif" font-style="italic" font-weight="700" font-size="14" fill="#303030">f</text><text x="228.6" y="189.8" font-family="Liberation Serif, serif" font-style="italic" font-weight="700" font-size="10.5" fill="#303030">x</text>
<path d="M1110.4 182.6 L1113.5 185.8 L1116.6 182.6" stroke="#2e2e2e" stroke-width="1.9" fill="none"/>
<path d="M23.4 212.6 V224 H11.6 Z" fill="#d9d9d9"/>
<path d="M373.6 236.2 L380.8 236.2 L377.20000000000005 240.2 Z" fill="#595959"/>
<path d="M526.6 236.2 L533.8 236.2 L530.2 240.2 Z" fill="#595959"/>
<path d="M666.6 236.2 L673.8 236.2 L670.2 240.2 Z" fill="#595959"/>
<path d="M675.6 666.4 H678.4 V663.6" stroke="#2f4f86" stroke-width="1.6" fill="none"/>
<path d="M1113 219 L1120 219 L1116.5 215 Z" fill="#2e2e2e"/>
<path d="M1113 736.2 L1120 736.2 L1116.5 740.2 Z" fill="#2e2e2e"/>
<path d="M33.4 754 V761.4 L28.8 757.7 Z M56.6 754 V761.4 L61.2 757.7 Z" fill="#a9a9a9"/>
<circle cx="385.9" cy="757.9" r="7.2" fill="none" stroke="#f4f4f4" stroke-width="1.5"/><path d="M381.9 757.9 H389.9 M385.9 753.9 V761.9" stroke="#f4f4f4" stroke-width="1.8"/>
<rect x="675.6" y="754" width="2" height="2" fill="#f2f2f2"/>
<rect x="675.6" y="757.6" width="2" height="2" fill="#f2f2f2"/>
<rect x="675.6" y="761.2" width="2" height="2" fill="#f2f2f2"/>
<path d="M702 754.8 V761.8 L698 758.3 Z" fill="#2e2e2e"/>
<path d="M1097 754.8 V761.8 L1101 758.3 Z" fill="#2e2e2e"/>
<path d="M48.7 778 H61.3 M48.7 778 V788.5 H54 M61.3 778 V781.5" stroke="#333" stroke-width="1.1" fill="none"/><path d="M48.7 780.3 H61.3" stroke="#333" stroke-width="1"/><path d="M50.6 783 H53.6 M50.6 785.5 H52.8" stroke="#333" stroke-width="1"/><circle cx="58.2" cy="785.4" r="3.6" fill="none" stroke="#333" stroke-width="1.1"/><circle cx="58.2" cy="785.4" r="1.7" fill="#333"/>
<path d="M666 786.5 H660.5 V777.5 H673.5 V780" stroke="#333" stroke-width="1.1" fill="none"/><circle cx="669.6" cy="785" r="2.4" fill="none" stroke="#333" stroke-width="1.3"/><path d="M669.6 781 V782.4 M669.6 787.6 V789 M665.6 785 H667 M672.2 785 H673.6 M666.8 782.2 L667.8 783.2 M671.4 786.8 L672.4 787.8 M672.4 782.2 L671.4 783.2 M667.8 786.8 L666.8 787.8" stroke="#333" stroke-width="1.1"/>
<rect x="826.5" y="777.2" width="12.6" height="11.2" fill="none" stroke="#333" stroke-width="1"/><path d="M830.7 777.2 V788.4 M834.9 777.2 V788.4 M826.5 780.9 H839.1 M826.5 784.7 H839.1" stroke="#333" stroke-width="1"/>
<rect x="866.5" y="777.2" width="13" height="11.2" fill="none" stroke="#333" stroke-width="1"/><rect x="869.5" y="779.8" width="7" height="6" fill="none" stroke="#333" stroke-width="1"/><path d="M871 781.8 H875 M871 783.8 H875" stroke="#333" stroke-width=".8"/>
<rect x="906.5" y="777.2" width="13" height="11.2" fill="none" stroke="#333" stroke-width="1"/><path d="M910.5 777.2 V782.6 H915.5 V777.2" fill="none" stroke="#333" stroke-width="1"/>
<path d="M939 783.4 H946.6" stroke="#333" stroke-width="1.1"/>
<path d="M1057 783.4 H1064.6 M1060.8 779.6 V787.2" stroke="#333" stroke-width="1.1"/>
</svg>
<div id="tx">
<span id="t0" style="left:515.5px;top:8px;font-size:12px;color:#bcbcbc;font-weight:400;letter-spacing:-0.334px">Classeur1  -  Excel</span>
<span id="t1" style="left:805px;top:8px;font-size:12px;color:#dedede;font-weight:400;letter-spacing:-0.539px">Nadège ORVOEN</span>
<span id="t2" style="left:14.4px;top:41px;font-size:12.5px;color:#2e2e2e;font-weight:400;-webkit-text-stroke:0.2px #2e2e2e;letter-spacing:-0.019px">Fichier</span>
<span id="t3" style="left:80.3px;top:41px;font-size:12.5px;color:#1a1a1a;font-weight:400;-webkit-text-stroke:0.2px #1a1a1a;letter-spacing:0.201px">Accueil</span>
<span id="t4" style="left:150px;top:41px;font-size:12.5px;color:#2e2e2e;font-weight:400;-webkit-text-stroke:0.2px #2e2e2e;letter-spacing:0.368px">Insertion</span>
<span id="t5" style="left:229px;top:41px;font-size:12.5px;color:#2e2e2e;font-weight:400;-webkit-text-stroke:0.2px #2e2e2e;letter-spacing:0.558px">Mise en page</span>
<span id="t6" style="left:338.3px;top:41px;font-size:12.5px;color:#2e2e2e;font-weight:400;-webkit-text-stroke:0.2px #2e2e2e;letter-spacing:0.258px">Formules</span>
<span id="t7" style="left:421px;top:41px;font-size:12.5px;color:#2e2e2e;font-weight:400;-webkit-text-stroke:0.2px #2e2e2e;letter-spacing:0.359px">Données</span>
<span id="t8" style="left:501px;top:41px;font-size:12.5px;color:#2e2e2e;font-weight:400;-webkit-text-stroke:0.2px #2e2e2e;letter-spacing:0.180px">Révision</span>
<span id="t9" style="left:579px;top:41px;font-size:12.5px;color:#2e2e2e;font-weight:400;-webkit-text-stroke:0.2px #2e2e2e;letter-spacing:0.287px">Affichage</span>
<span id="t10" style="left:661px;top:41px;font-size:12.5px;color:#2e2e2e;font-weight:400;-webkit-text-stroke:0.2px #2e2e2e;letter-spacing:0.531px">Développeur</span>
<span id="t11" style="left:765px;top:41px;font-size:12.5px;color:#2e2e2e;font-weight:400;-webkit-text-stroke:0.2px #2e2e2e;letter-spacing:0.390px">Aide</span>
<span id="t12" style="left:858px;top:41px;font-size:12.5px;color:#2e2e2e;font-weight:400;-webkit-text-stroke:0.2px #2e2e2e;letter-spacing:0.347px">Dites-le-nous</span>
<span id="t13" style="left:1052.6px;top:41px;font-size:12.5px;color:#1a1a1a;font-weight:400;-webkit-text-stroke:0.35px #1a1a1a;letter-spacing:0.664px">Partager</span>
<span id="t14" style="left:3.8px;top:143px;font-size:11px;color:#2e2e2e;font-weight:400;-webkit-text-stroke:0.2px #2e2e2e;letter-spacing:-0.045px">Presse-papiers</span>
<span id="t15" style="left:189px;top:143px;font-size:11px;color:#2e2e2e;font-weight:400;-webkit-text-stroke:0.2px #2e2e2e;letter-spacing:0.146px">Police</span>
<span id="t16" style="left:383.5px;top:143px;font-size:11px;color:#2e2e2e;font-weight:400;-webkit-text-stroke:0.2px #2e2e2e;letter-spacing:0.361px">Alignement</span>
<span id="t17" style="left:532.7px;top:143px;font-size:11px;color:#2e2e2e;font-weight:400;-webkit-text-stroke:0.2px #2e2e2e;letter-spacing:0.375px">Nombre</span>
<span id="t18" style="left:702px;top:143px;font-size:11px;color:#2e2e2e;font-weight:400;-webkit-text-stroke:0.2px #2e2e2e;letter-spacing:-0.154px">Styles</span>
<span id="t19" style="left:860.5px;top:143px;font-size:11px;color:#2e2e2e;font-weight:400;-webkit-text-stroke:0.2px #2e2e2e;letter-spacing:0.151px">Cellules</span>
<span id="t20" style="left:964.5px;top:143px;font-size:11px;color:#2e2e2e;font-weight:400;-webkit-text-stroke:0.2px #2e2e2e;letter-spacing:0.760px">Édition</span>
<span id="t21" style="left:13.8px;top:104px;font-size:11px;color:#2b2b2b;font-weight:400;-webkit-text-stroke:0.2px #2b2b2b;letter-spacing:0.533px">Coller</span>
<span id="t22" style="left:108.8px;top:79px;font-size:12px;color:#2b2b2b;font-weight:400;-webkit-text-stroke:0.2px #2b2b2b;letter-spacing:0.047px">Calibri</span>
<span id="t23" style="left:233.6px;top:79px;font-size:12px;color:#2b2b2b;font-weight:400;letter-spacing:-0.3px;-webkit-text-stroke:0.2px #2b2b2b;">11</span>
<span id="t24" style="left:282.4px;top:80px;font-size:13.5px;color:#2e2e2e;font-weight:400;-webkit-text-stroke:0.3px #2e2e2e;">A</span>
<span id="t25" style="left:307.2px;top:80px;font-size:11px;color:#2e2e2e;font-weight:400;-webkit-text-stroke:0.3px #2e2e2e;">A</span>
<span id="t26" style="left:111px;top:110px;font-size:12px;color:#222222;font-weight:700;-webkit-text-stroke:0.4px #222;">G</span>
<span id="t27" style="left:137.1px;top:110px;font-size:13px;color:#222222;font-weight:700;font-family:'Liberation Serif',serif;font-style:italic;-webkit-text-stroke:0.4px #222;">I</span>
<span id="t28" style="left:161.1px;top:110px;font-size:12px;color:#222222;font-weight:700;-webkit-text-stroke:0.3px #222;">S</span>
<span id="t29" style="left:291.6px;top:110px;font-size:13.5px;color:#2e2e2e;font-weight:400;-webkit-text-stroke:0.3px #2e2e2e;">A</span>
<span id="t30" style="left:469.9px;top:74px;font-size:10.5px;color:#2a2a2a;font-weight:700;letter-spacing:-0.4px;-webkit-text-stroke:0.2px #2a2a2a;">ab</span>
<span id="t31" style="left:469.9px;top:81px;font-size:10.5px;color:#2a2a2a;font-weight:700;-webkit-text-stroke:0.2px #2a2a2a;">c</span>
<span id="t32" style="left:522.4px;top:71px;font-size:12px;color:#2b2b2b;font-weight:400;-webkit-text-stroke:0.2px #2b2b2b;letter-spacing:-0.243px">Standard</span>
<span id="t33" style="left:563.4px;top:94px;font-size:14px;color:#262626;font-weight:400;-webkit-text-stroke:0.3px #262626;">%</span>
<span id="t34" style="left:586.3px;top:94px;font-size:10px;color:#262626;font-weight:400;-webkit-text-stroke:0.25px #262626;letter-spacing:-0.994px">000</span>
<span id="t35" style="left:642.8px;top:70px;font-size:11.5px;color:#2b2b2b;font-weight:400;-webkit-text-stroke:0.2px #2b2b2b;letter-spacing:0.334px">Mise en forme conditionnelle</span>
<span id="t36" style="left:642.8px;top:93px;font-size:11.5px;color:#2b2b2b;font-weight:400;-webkit-text-stroke:0.2px #2b2b2b;letter-spacing:0.197px">Mettre sous forme de tableau</span>
<span id="t37" style="left:642.8px;top:116px;font-size:11.5px;color:#2b2b2b;font-weight:400;-webkit-text-stroke:0.2px #2b2b2b;letter-spacing:-0.056px">Styles de cellules</span>
<span id="t38" style="left:853.6px;top:70px;font-size:11.5px;color:#2b2b2b;font-weight:400;-webkit-text-stroke:0.2px #2b2b2b;letter-spacing:-0.066px">Insérer</span>
<span id="t39" style="left:853.6px;top:93px;font-size:11.5px;color:#2b2b2b;font-weight:400;-webkit-text-stroke:0.2px #2b2b2b;letter-spacing:0.317px">Supprimer</span>
<span id="t40" style="left:853.6px;top:116px;font-size:11.5px;color:#2b2b2b;font-weight:400;-webkit-text-stroke:0.2px #2b2b2b;letter-spacing:0.336px">Format</span>
<span id="t41" style="left:12.2px;top:176px;font-size:12px;color:#454545;font-weight:400;-webkit-text-stroke:0.2px #454545;letter-spacing:1.242px">D25</span>
<span id="t42" style="left:202.8px;top:208px;font-size:13px;color:#f2f2f2;font-weight:400;">A</span>
<span id="t43" style="left:458.4px;top:208px;font-size:13px;color:#f2f2f2;font-weight:400;">B</span>
<span id="t44" style="left:604.9px;top:208px;font-size:13px;color:#f2f2f2;font-weight:400;">C</span>
<span id="t45" style="left:833.4px;top:208px;font-size:13px;color:#f2f2f2;font-weight:400;">D</span>
<span id="t46" style="left:9.6px;top:229px;font-size:12.5px;color:#f4f4f4;font-weight:400;">1</span>
<span id="t47" style="left:9.6px;top:249px;font-size:12.5px;color:#f4f4f4;font-weight:400;">2</span>
<span id="t48" style="left:10.1px;top:269px;font-size:12.5px;color:#f4f4f4;font-weight:400;">3</span>
<span id="t49" style="left:10.1px;top:289px;font-size:12.5px;color:#f4f4f4;font-weight:400;">4</span>
<span id="t50" style="left:9.6px;top:309px;font-size:12.5px;color:#f4f4f4;font-weight:400;">5</span>
<span id="t51" style="left:10.1px;top:329px;font-size:12.5px;color:#f4f4f4;font-weight:400;">6</span>
<span id="t52" style="left:9.6px;top:349px;font-size:12.5px;color:#f4f4f4;font-weight:400;">7</span>
<span id="t53" style="left:9.6px;top:369px;font-size:12.5px;color:#f4f4f4;font-weight:400;">8</span>
<span id="t54" style="left:9.6px;top:389px;font-size:12.5px;color:#f4f4f4;font-weight:400;">9</span>
<span id="t55" style="left:6.7px;top:409px;font-size:12.5px;color:#f4f4f4;font-weight:400;letter-spacing:0.194px">10</span>
<span id="t56" style="left:6.7px;top:429px;font-size:12.5px;color:#f4f4f4;font-weight:400;letter-spacing:1.116px">11</span>
<span id="t57" style="left:6.7px;top:449px;font-size:12.5px;color:#f4f4f4;font-weight:400;letter-spacing:0.194px">12</span>
<span id="t58" style="left:6.7px;top:469px;font-size:12.5px;color:#f4f4f4;font-weight:400;letter-spacing:0.194px">13</span>
<span id="t59" style="left:6.7px;top:489px;font-size:12.5px;color:#f4f4f4;font-weight:400;letter-spacing:0.194px">14</span>
<span id="t60" style="left:6.7px;top:509px;font-size:12.5px;color:#f4f4f4;font-weight:400;letter-spacing:0.194px">15</span>
<span id="t61" style="left:6.7px;top:529px;font-size:12.5px;color:#f4f4f4;font-weight:400;letter-spacing:0.194px">16</span>
<span id="t62" style="left:6.7px;top:549px;font-size:12.5px;color:#f4f4f4;font-weight:400;letter-spacing:0.194px">17</span>
<span id="t63" style="left:6.7px;top:569px;font-size:12.5px;color:#f4f4f4;font-weight:400;letter-spacing:0.194px">18</span>
<span id="t64" style="left:6.7px;top:589px;font-size:12.5px;color:#f4f4f4;font-weight:400;letter-spacing:0.194px">19</span>
<span id="t65" style="left:6.7px;top:609px;font-size:12.5px;color:#f4f4f4;font-weight:400;letter-spacing:0.194px">20</span>
<span id="t66" style="left:6.7px;top:629px;font-size:12.5px;color:#f4f4f4;font-weight:400;letter-spacing:0.194px">21</span>
<span id="t67" style="left:6.7px;top:649px;font-size:12.5px;color:#f4f4f4;font-weight:400;letter-spacing:0.194px">22</span>
<span id="t68" style="left:6.7px;top:669px;font-size:12.5px;color:#f4f4f4;font-weight:400;letter-spacing:0.194px">23</span>
<span id="t69" style="left:6.7px;top:689px;font-size:12.5px;color:#f4f4f4;font-weight:400;letter-spacing:0.194px">24</span>
<span id="t70" style="left:6.7px;top:709px;font-size:12.5px;color:#f4f4f4;font-weight:400;letter-spacing:0.194px">25</span>
<span id="t71" style="left:6.7px;top:729px;font-size:12.5px;color:#f4f4f4;font-weight:400;letter-spacing:0.194px">26</span>
<span id="t72" style="left:28px;top:229px;font-size:12px;color:#ffffff;font-weight:700;letter-spacing:0.793px">Column1</span>
<span id="t73" style="left:388px;top:229px;font-size:12px;color:#ffffff;font-weight:700;letter-spacing:0.499px">Physique (T)</span>
<span id="t74" style="left:541px;top:229px;font-size:12px;color:#ffffff;font-weight:700;letter-spacing:0.705px">Dépôt (T)</span>
<span id="t75" style="left:29px;top:249px;font-size:12.5px;color:#000000;font-weight:400;-webkit-text-stroke:0.25px #000;letter-spacing:-0.144px">AVOINE BLEUE</span>
<span id="t76" style="left:388.7px;top:249px;font-size:12.5px;color:#000000;font-weight:400;-webkit-text-stroke:0.25px #000;letter-spacing:0.241px">11628.083</span>
<span id="t77" style="left:541.7px;top:249px;font-size:12.5px;color:#000000;font-weight:400;-webkit-text-stroke:0.25px #000;letter-spacing:0.144px">1091.824</span>
<span id="t78" style="left:29px;top:269px;font-size:12.5px;color:#000000;font-weight:400;-webkit-text-stroke:0.25px #000;letter-spacing:-0.016px">AVOINE ROUGE BIO AB</span>
<span id="t79" style="left:388.7px;top:269px;font-size:12.5px;color:#000000;font-weight:400;-webkit-text-stroke:0.25px #000;letter-spacing:0.169px">984.041</span>
<span id="t80" style="left:541.7px;top:269px;font-size:12.5px;color:#000000;font-weight:400;-webkit-text-stroke:0.25px #000;letter-spacing:0.169px">523.722</span>
<span id="t81" style="left:29px;top:289px;font-size:12.5px;color:#000000;font-weight:400;-webkit-text-stroke:0.25px #000;letter-spacing:0.015px">AVOINE BRASSERIE sebastian</span>
<span id="t82" style="left:388.7px;top:289px;font-size:12.5px;color:#000000;font-weight:400;-webkit-text-stroke:0.25px #000;letter-spacing:0.169px">881.825</span>
<span id="t83" style="left:541.7px;top:289px;font-size:12.5px;color:#000000;font-weight:400;-webkit-text-stroke:0.25px #000;letter-spacing:0.169px">570.064</span>
<span id="t84" style="left:29px;top:309px;font-size:12.5px;color:#000000;font-weight:400;-webkit-text-stroke:0.25px #000;letter-spacing:0.068px">AVOINE BRASSERIE beatrix</span>
<span id="t85" style="left:389.2px;top:309px;font-size:12.5px;color:#000000;font-weight:400;-webkit-text-stroke:0.25px #000;letter-spacing:0.085px">684.078</span>
<span id="t86" style="left:541.7px;top:309px;font-size:12.5px;color:#000000;font-weight:400;-webkit-text-stroke:0.25px #000;letter-spacing:0.203px">98.137</span>
<span id="t87" style="left:29px;top:329px;font-size:12.5px;color:#000000;font-weight:400;-webkit-text-stroke:0.25px #000;letter-spacing:0.215px">AVOINE BLANCHE Durable</span>
<span id="t88" style="left:389.2px;top:329px;font-size:12.5px;color:#000000;font-weight:400;-webkit-text-stroke:0.25px #000;letter-spacing:0.085px">677.121</span>
<span id="t89" style="left:542.2px;top:329px;font-size:12.5px;color:#000000;font-weight:400;-webkit-text-stroke:0.25px #000;letter-spacing:0.085px">463.381</span>
<span id="t90" style="left:29px;top:349px;font-size:12.5px;color:#000000;font-weight:400;-webkit-text-stroke:0.25px #000;letter-spacing:-0.028px">AVOINE brasserie DECLASSEE</span>
<span id="t91" style="left:389.2px;top:349px;font-size:12.5px;color:#000000;font-weight:400;-webkit-text-stroke:0.25px #000;letter-spacing:0.085px">451.323</span>
<span id="t92" style="left:542.2px;top:349px;font-size:12.5px;color:#000000;font-weight:400;-webkit-text-stroke:0.25px #000;letter-spacing:0.085px">302.336</span>
<span id="t93" style="left:29px;top:369px;font-size:12.5px;color:#000000;font-weight:400;-webkit-text-stroke:0.25px #000;letter-spacing:0.120px">AVOINE NOIRE</span>
<span id="t94" style="left:389.2px;top:369px;font-size:12.5px;color:#000000;font-weight:400;-webkit-text-stroke:0.25px #000;letter-spacing:0.085px">435.133</span>
<span id="t95" style="left:541.7px;top:369px;font-size:12.5px;color:#000000;font-weight:400;-webkit-text-stroke:0.25px #000;letter-spacing:0.169px">123.635</span>
<span id="t96" style="left:29px;top:389px;font-size:12.5px;color:#000000;font-weight:400;-webkit-text-stroke:0.25px #000;letter-spacing:0.280px">AVOINE INDIGO</span>
<span id="t97" style="left:389.2px;top:389px;font-size:12.5px;color:#000000;font-weight:400;-webkit-text-stroke:0.25px #000;letter-spacing:0.085px">354.094</span>
<span id="t98" style="left:541.7px;top:389px;font-size:12.5px;color:#000000;font-weight:400;-webkit-text-stroke:0.25px #000;letter-spacing:0.169px">144.177</span>
<span id="t99" style="left:29px;top:409px;font-size:12.5px;color:#000000;font-weight:400;-webkit-text-stroke:0.25px #000;letter-spacing:-0.027px">AVOINE ORANGE BIO C2</span>
<span id="t100" style="left:388.7px;top:409px;font-size:12.5px;color:#000000;font-weight:400;-webkit-text-stroke:0.25px #000;letter-spacing:0.169px">221.298</span>
<span id="t101" style="left:541.7px;top:409px;font-size:12.5px;color:#000000;font-weight:400;-webkit-text-stroke:0.25px #000;letter-spacing:0.169px">142.518</span>
<span id="t102" style="left:29px;top:429px;font-size:12.5px;color:#000000;font-weight:400;-webkit-text-stroke:0.25px #000;letter-spacing:0.246px">AVOINE MOUTURE sebastian</span>
<span id="t103" style="left:388.7px;top:429px;font-size:12.5px;color:#000000;font-weight:400;-webkit-text-stroke:0.25px #000;letter-spacing:0.169px">213.391</span>
<span id="t104" style="left:541.7px;top:429px;font-size:12.5px;color:#000000;font-weight:400;-webkit-text-stroke:0.25px #000;letter-spacing:0.169px">130.894</span>
<span id="t105" style="left:29px;top:449px;font-size:12.5px;color:#000000;font-weight:400;-webkit-text-stroke:0.25px #000;letter-spacing:0.047px">AVOINE VIOLET CONV</span>
<span id="t106" style="left:388.7px;top:449px;font-size:12.5px;color:#000000;font-weight:400;-webkit-text-stroke:0.25px #000;letter-spacing:0.295px">150</span>
<span id="t107" style="left:542.2px;top:449px;font-size:12.5px;color:#000000;font-weight:400;-webkit-text-stroke:0.25px #000;">0</span>
<span id="t108" style="left:29px;top:469px;font-size:12.5px;color:#000000;font-weight:400;-webkit-text-stroke:0.25px #000;letter-spacing:0.280px">AVOINE BLANCHE non Durable</span>
<span id="t109" style="left:388.7px;top:469px;font-size:12.5px;color:#000000;font-weight:400;-webkit-text-stroke:0.25px #000;letter-spacing:0.169px">126.336</span>
<span id="t110" style="left:541.7px;top:469px;font-size:12.5px;color:#000000;font-weight:400;-webkit-text-stroke:0.25px #000;letter-spacing:0.203px">71.846</span>
<span id="t111" style="left:29px;top:489px;font-size:12.5px;color:#000000;font-weight:400;-webkit-text-stroke:0.25px #000;letter-spacing:0.316px">AVOINE MOUTURE beatrix</span>
<span id="t112" style="left:388.7px;top:489px;font-size:12.5px;color:#000000;font-weight:400;-webkit-text-stroke:0.25px #000;letter-spacing:0.203px">58.601</span>
<span id="t113" style="left:541.7px;top:489px;font-size:12.5px;color:#000000;font-weight:400;-webkit-text-stroke:0.25px #000;letter-spacing:0.572px">20.111</span>
<span id="t114" style="left:29px;top:509px;font-size:12.5px;color:#000000;font-weight:400;-webkit-text-stroke:0.25px #000;letter-spacing:0.208px">AVOINE Déclassment SEBASTIAN</span>
<span id="t115" style="left:389.2px;top:509px;font-size:12.5px;color:#000000;font-weight:400;-webkit-text-stroke:0.25px #000;letter-spacing:0.169px">30.4</span>
<span id="t116" style="left:541.7px;top:509px;font-size:12.5px;color:#000000;font-weight:400;-webkit-text-stroke:0.25px #000;letter-spacing:0.594px">20</span>
<span id="t117" style="left:29px;top:529px;font-size:12.5px;color:#000000;font-weight:400;-webkit-text-stroke:0.25px #000;letter-spacing:0.217px">AVOINE JAUNE Déclassement de AVOINE VERTE</span>
<span id="t118" style="left:388.7px;top:529px;font-size:12.5px;color:#000000;font-weight:400;-webkit-text-stroke:0.25px #000;letter-spacing:0.594px">28</span>
<span id="t119" style="left:541.7px;top:529px;font-size:12.5px;color:#000000;font-weight:400;-webkit-text-stroke:0.25px #000;letter-spacing:0.594px">22</span>
<span id="t120" style="left:29px;top:549px;font-size:12.5px;color:#000000;font-weight:400;-webkit-text-stroke:0.25px #000;letter-spacing:0.105px">AVOINE Brasserie VERTE</span>
<span id="t121" style="left:388.7px;top:549px;font-size:12.5px;color:#000000;font-weight:400;-webkit-text-stroke:0.25px #000;letter-spacing:0.335px">26.2</span>
<span id="t122" style="left:541.7px;top:549px;font-size:12.5px;color:#000000;font-weight:400;-webkit-text-stroke:0.25px #000;letter-spacing:0.594px">23</span>
<span id="t123" style="left:29px;top:569px;font-size:12.5px;color:#000000;font-weight:400;-webkit-text-stroke:0.25px #000;letter-spacing:-0.084px">AVOINE BLUE</span>
<span id="t124" style="left:388.7px;top:569px;font-size:12.5px;color:#000000;font-weight:400;-webkit-text-stroke:0.25px #000;letter-spacing:0.594px">15</span>
<span id="t125" style="left:542.2px;top:569px;font-size:12.5px;color:#000000;font-weight:400;-webkit-text-stroke:0.25px #000;">0</span>
<span id="t126" style="left:29px;top:589px;font-size:12.5px;color:#000000;font-weight:400;-webkit-text-stroke:0.25px #000;letter-spacing:-0.130px">AVOINE VERTE</span>
<span id="t127" style="left:388.7px;top:589px;font-size:12.5px;color:#000000;font-weight:400;-webkit-text-stroke:0.25px #000;letter-spacing:0.255px">2.385</span>
<span id="t128" style="left:541.7px;top:589px;font-size:12.5px;color:#000000;font-weight:400;-webkit-text-stroke:0.25px #000;letter-spacing:0.255px">2.385</span>
<span id="t129" style="left:29px;top:609px;font-size:12.5px;color:#000000;font-weight:400;-webkit-text-stroke:0.25px #000;letter-spacing:0.339px">AVOINE Mouture VERTE</span>
<span id="t130" style="left:389.2px;top:609px;font-size:12.5px;color:#000000;font-weight:400;-webkit-text-stroke:0.25px #000;letter-spacing:0.255px">0.8</span>
<span id="t131" style="left:542.2px;top:609px;font-size:12.5px;color:#000000;font-weight:400;-webkit-text-stroke:0.25px #000;">0</span>
<span id="t132" style="left:28px;top:629px;font-size:12.5px;color:#000000;font-weight:400;-webkit-text-stroke:0.25px #000;letter-spacing:-0.182px">REPRISE AVOINE</span>
<span id="t133" style="left:388.7px;top:629px;font-size:12.5px;color:#000000;font-weight:400;-webkit-text-stroke:0.25px #000;letter-spacing:0.725px">-8</span>
<span id="t134" style="left:542.2px;top:629px;font-size:12.5px;color:#000000;font-weight:400;-webkit-text-stroke:0.25px #000;">0</span>
<span id="t135" style="left:29px;top:649px;font-size:12.5px;color:#000000;font-weight:400;-webkit-text-stroke:0.25px #000;letter-spacing:0.202px">AVOINEXX</span>
<span id="t136" style="left:388.7px;top:649px;font-size:12.5px;color:#000000;font-weight:400;-webkit-text-stroke:0.25px #000;letter-spacing:0.229px">-24.35</span>
<span id="t137" style="left:541.7px;top:649px;font-size:12.5px;color:#000000;font-weight:400;-webkit-text-stroke:0.25px #000;letter-spacing:0.229px">-24.35</span>
<span id="t138" style="left:114.6px;top:748px;font-size:12px;color:#f0f0f0;font-weight:400;letter-spacing:-0.057px">Feuil1</span>
<span id="t139" style="left:175.6px;top:748px;font-size:12px;color:#f0f0f0;font-weight:400;letter-spacing:0.063px">Feuil2</span>
<span id="t140" style="left:236.4px;top:748px;font-size:12px;color:#f0f0f0;font-weight:400;letter-spacing:0.062px">Feuil3</span>
<span id="t141" style="left:296px;top:748px;font-size:12px;color:#1e7145;font-weight:700;-webkit-text-stroke:0.2px #1e7145;letter-spacing:0.503px">Feuil4</span>
<span id="t142" style="left:7.699999999999999px;top:774px;font-size:11px;color:#262626;font-weight:400;-webkit-text-stroke:0.2px #262626;letter-spacing:0.038px">Prêt</span>
<span id="t143" style="left:677px;top:774px;font-size:11px;color:#262626;font-weight:400;-webkit-text-stroke:0.2px #262626;letter-spacing:0.201px">Paramètres d&#x27;affichage</span>
<span id="t144" style="left:1078.2px;top:773px;font-size:11.5px;color:#262626;font-weight:400;-webkit-text-stroke:0.2px #262626;letter-spacing:-0.652px">100 %</span>
</div>
</div></body></html>
